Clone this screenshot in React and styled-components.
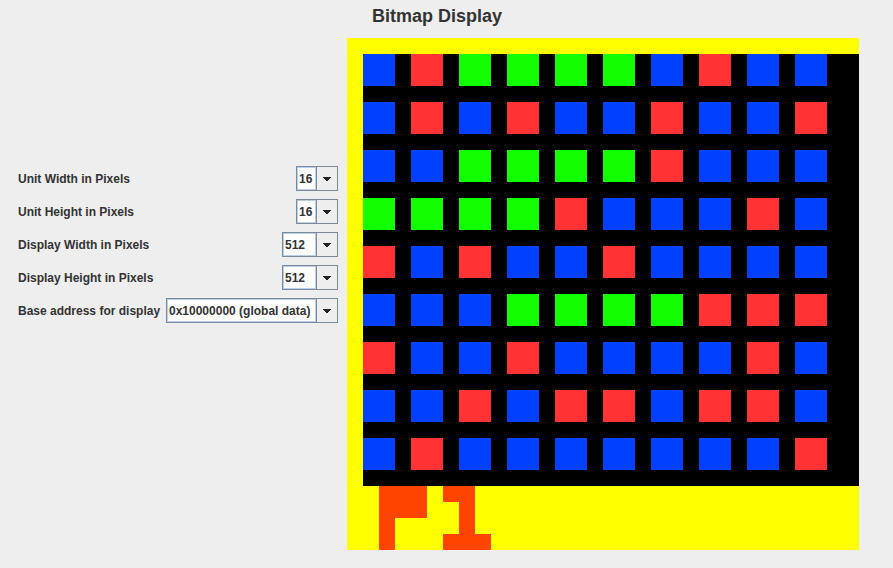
import styled, { createGlobalStyle } from 'styled-components';

const GlobalStyle = createGlobalStyle`
  html, body {
    margin: 0;
    padding: 0;
    background: #eeeeee;
  }
  body {
    font-family: 'Liberation Sans', Arial, sans-serif;
    color: #333333;
  }
`;

const COLORS = {
  B: '#0040ff',
  R: '#ff3333',
  G: '#11ff00',
};

const TILE_ROWS = [
  'BRGGGGBRBB',
  'BRBRBBRBBR',
  'BBGGGGRBBB',
  'GGGGRBBBRB',
  'RBRBBRBBBB',
  'BBBGGGGRRR',
  'RBBRBBBBRB',
  'BBRBRRBRRB',
  'BRBBBBBBBR',
];

// orange pixels under the board, in 16px units (col, row within footer)
const SPRITE = [
  [2, 0], [3, 0], [4, 0], [6, 0], [7, 0],
  [2, 1], [3, 1], [4, 1], [7, 1],
  [2, 2], [7, 2],
  [2, 3], [6, 3], [7, 3], [8, 3],
];

const controls = [
  { label: 'Unit Width in Pixels', value: '16', width: 42 },
  { label: 'Unit Height in Pixels', value: '16', width: 42 },
  { label: 'Display Width in Pixels', value: '512', width: 56 },
  { label: 'Display Height in Pixels', value: '512', width: 56 },
  { label: 'Base address for display', value: '0x10000000 (global data)', width: 172 },
];

const Page = styled.div`
  display: flex;
  width: 893px;
  height: 568px;
  overflow: hidden;
`;

const Controls = styled.div`
  width: 338px;
  box-sizing: border-box;
  padding: 166px 0 0 18px;
  display: flex;
  flex-direction: column;
  gap: 8px;
`;

const Row = styled.div`
  height: 25px;
  display: flex;
  justify-content: space-between;
  align-items: center;
`;

const Label = styled.span`
  font-size: 12px;
  font-weight: bold;
  color: #333333;
  white-space: nowrap;
`;

const Combo = styled.div`
  width: ${(p) => p.$width}px;
  height: 25px;
  box-sizing: border-box;
  border: 1px solid #7a8a99;
  display: flex;
  background: #ffffff;
`;

const Field = styled.div`
  flex: 1;
  border: 1px solid #b8cfe5;
  padding-left: 1px;
  display: flex;
  align-items: center;
  font-size: 12px;
  font-weight: bold;
  color: #333333;
  white-space: nowrap;
  overflow: hidden;
`;

const ArrowButton = styled.div`
  width: 20px;
  border-left: 1px solid #7a8a99;
  background: #eeeeee;
  display: flex;
  align-items: center;
  justify-content: center;
`;

const DisplayPanel = styled.div`
  margin-left: 9px;
  display: flex;
  flex-direction: column;
`;

const Title = styled.h1`
  margin: 5px 0 11px 0;
  padding-left: 25px;
  font-size: 18px;
  line-height: 22px;
  font-weight: bold;
  color: #333333;
`;

const Frame = styled.div`
  width: 512px;
  height: 512px;
  background: #ffff00;
  box-sizing: border-box;
  padding-top: 16px;
`;

const Board = styled.div`
  margin-left: 16px;
  width: 496px;
  height: 432px;
  box-sizing: border-box;
  background: #000000;
  padding: 0 32px 16px 0;
  display: grid;
  grid-template-columns: repeat(10, 32px);
  grid-auto-rows: 32px;
  gap: 16px;
`;

const Tile = styled.div`
  background: ${(p) => p.$color};
`;

const Sprite = styled.svg`
  display: block;
`;

const ArrowDown = () => (
  <svg width="8" height="4" shapeRendering="crispEdges">
    <rect x="0" y="0" width="8" height="1" fill="#222" />
    <rect x="1" y="1" width="6" height="1" fill="#222" />
    <rect x="2" y="2" width="4" height="1" fill="#222" />
    <rect x="3" y="3" width="2" height="1" fill="#222" />
  </svg>
);

const App = () => {
  return (
    <>
      <GlobalStyle />
      <Page>
        <Controls>
          {controls.map((c) => (
            <Row key={c.label}>
              <Label>{c.label}</Label>
              <Combo $width={c.width}>
                <Field>{c.value}</Field>
                <ArrowButton>
                  <ArrowDown />
                </ArrowButton>
              </Combo>
            </Row>
          ))}
        </Controls>
        <DisplayPanel>
          <Title>Bitmap Display</Title>
          <Frame>
            <Board>
              {TILE_ROWS.map((row, r) =>
                row.split('').map((ch, c) => (
                  <Tile key={`${r}-${c}`} $color={COLORS[ch]} />
                ))
              )}
            </Board>
            <Sprite width="512" height="64" shapeRendering="crispEdges">
              {SPRITE.map(([x, y]) => (
                <rect key={`${x}-${y}`} x={x * 16} y={y * 16} width="16" height="16" fill="#ff4400" />
              ))}
            </Sprite>
          </Frame>
        </DisplayPanel>
      </Page>
    </>
  );
};

export default App;
